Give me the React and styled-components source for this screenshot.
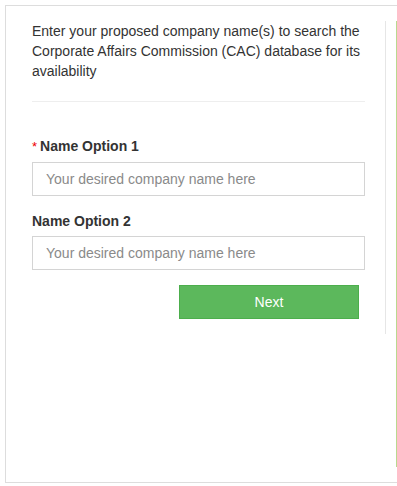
import React from 'react'
import styled, { createGlobalStyle } from 'styled-components'

const GlobalStyle = createGlobalStyle`
  html, body {
    margin: 0;
    padding: 0;
    background: #fff;
    overflow: hidden;
  }
  body {
    font-family: "Liberation Sans", Arial, sans-serif;
    color: #333;
  }
  * { box-sizing: border-box; }
`

const Page = styled.div`
  width: 100vw;
  overflow: hidden;
  padding: 5px 0 5px 5px;
`

const Panel = styled.div`
  width: 455px;
  border: 1px solid #dddddd;
  padding: 15px 0 15px 0;
  display: flex;
  align-items: flex-start;
  gap: 10px;
`

const FormColumn = styled.div`
  flex: 0 0 380px;
  padding: 0 20px 15px 26px;
  border-right: 1px solid #e6e6e6;
`

const SideColumn = styled.div`
  flex: 1;
  height: 446px;
  border-left: 2px solid #b9d98f;
`

const Intro = styled.p`
  margin: 0;
  font-size: 14px;
  line-height: 20px;
  color: #333;
`

const Divider = styled.hr`
  border: 0;
  border-top: 1px solid #eeeeee;
  margin: 20px 0 34px;
`

const Field = styled.div`
  margin-bottom: 15px;
`

const Label = styled.label`
  display: block;
  font-size: 14px;
  line-height: 20px;
  font-weight: bold;
  color: #333;
  margin-bottom: 5px;
`

const Required = styled.span`
  color: #e00;
  font-weight: normal;
  margin-right: 3px;
  font-size: 13px;
`

const Input = styled.input`
  display: block;
  width: 100%;
  height: 34px;
  padding: 6px 13px;
  border: 1px solid #d4d4d4;
  border-radius: 0;
  font-family: inherit;
  font-size: 14px;
  color: #333;
  outline: none;
  &::placeholder {
    color: #8a8a8a;
  }
`

const Actions = styled.div`
  display: flex;
  justify-content: flex-end;
  padding-right: 6px;
`

const NextButton = styled.button`
  width: 180px;
  height: 34px;
  background: #5cb85c;
  border: 1px solid #4cae4c;
  color: #fff;
  font-family: inherit;
  font-size: 14px;
  cursor: pointer;
`

export default function App() {
  return (
    <Page>
      <GlobalStyle />
      <Panel>
        <FormColumn>
          <Intro>
            Enter your proposed company name(s) to search the Corporate Affairs
            Commission (CAC) database for its availability
          </Intro>
          <Divider />
          <Field>
            <Label><Required>*</Required>Name Option 1</Label>
            <Input placeholder="Your desired company name here" />
          </Field>
          <Field>
            <Label>Name Option 2</Label>
            <Input placeholder="Your desired company name here" />
          </Field>
          <Actions>
            <NextButton>Next</NextButton>
          </Actions>
        </FormColumn>
        <SideColumn />
      </Panel>
    </Page>
  )
}
